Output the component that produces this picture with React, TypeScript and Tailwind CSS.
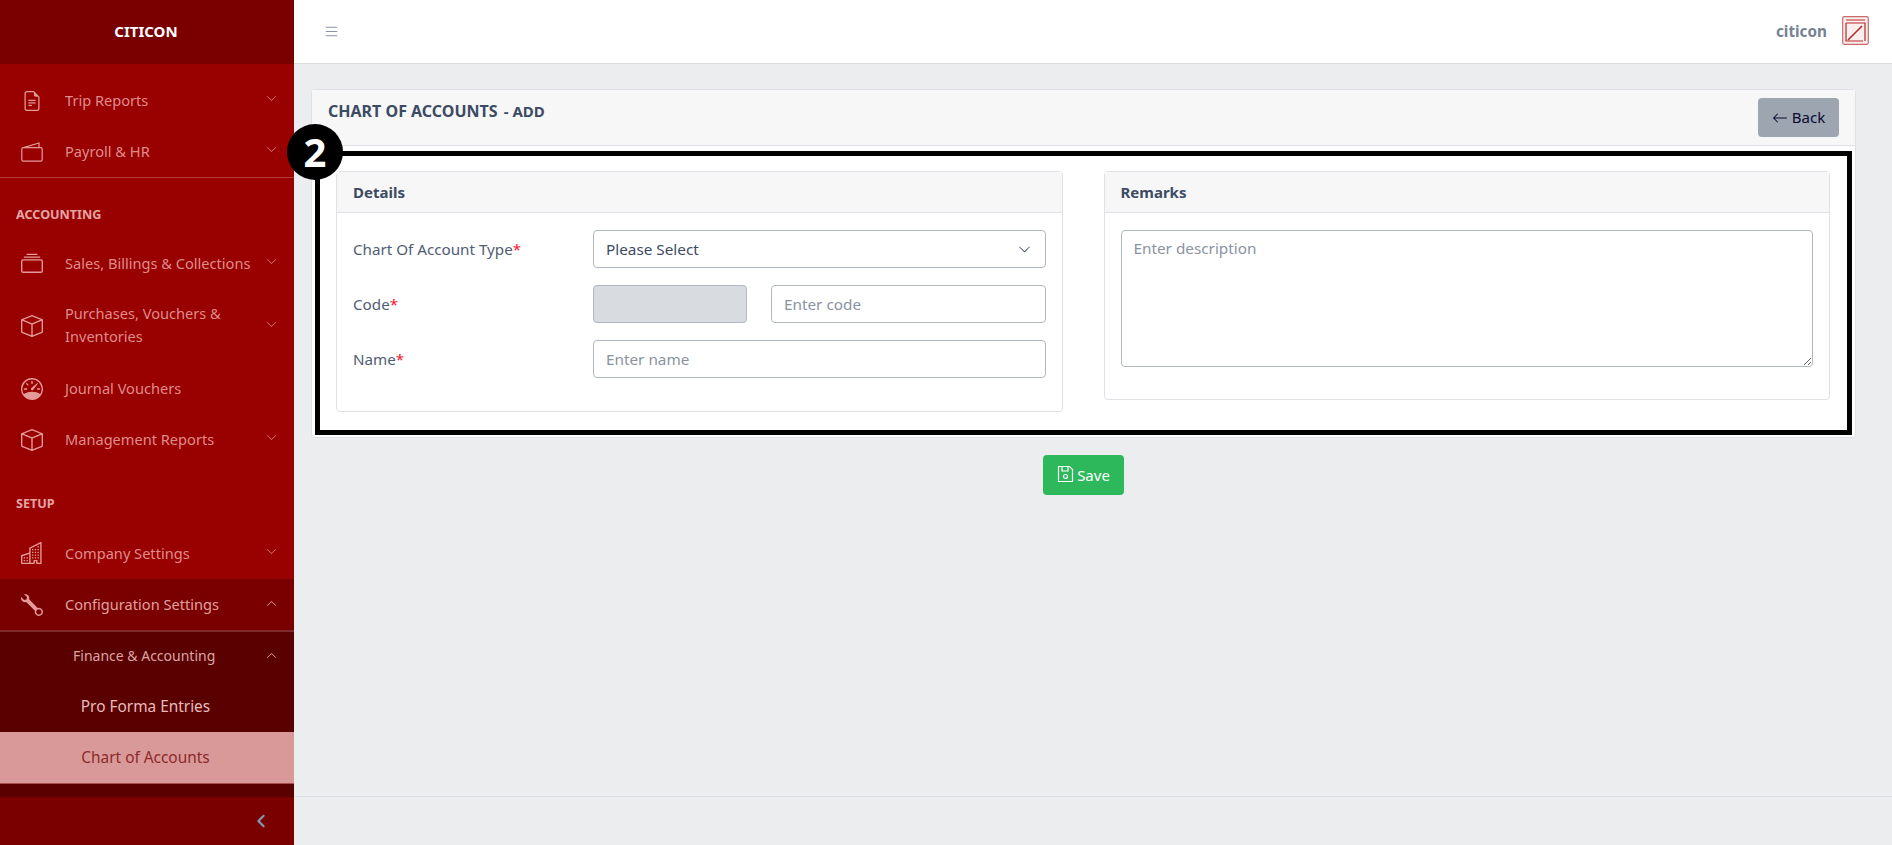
import React from "react";
import { BsArrowLeft, BsBox, BsBuildings, BsChevronDown, BsChevronLeft, BsChevronUp, BsCollection, BsFileEarmarkText, BsList, BsSpeedometer, BsWrench } from "react-icons/bs";

function WalletIcon() {
  return (
    <svg width="22" height="20" viewBox="0 0 22 20" fill="none" stroke="currentColor" strokeWidth="1.2">
      <rect x="0.8" y="5.6" width="20.4" height="13.6" rx="1.6" />
      <path d="M2.5 5.6L18 1V5.6" />
    </svg>
  );
}

function NavRow({ icon, label, chevron, tall, active, rowH }: { icon: React.ReactNode; label: React.ReactNode; chevron?: "up" | "down"; tall?: boolean; active?: boolean; rowH?: string }) {
  return (
    <div className={`flex items-center pl-[20px] pr-[17px] ${rowH ? rowH : tall ? "h-[74px]" : "h-[51px]"} ${active ? "bg-[#7a0000] text-[#e0a0a0]" : ""}`}>
      <span className="w-[24px] flex justify-center text-[22px] text-[#e59a9a]">{icon}</span>
      <span className={`ml-[21px] flex-1 leading-[23px] ${tall ? "pb-[3px]" : ""}`}>{label}</span>
      {chevron === "down" && <BsChevronDown className="w-[11px] h-[11px] text-[#d97a7a] -mt-[4px]" />}
      {chevron === "up" && <BsChevronUp className="w-[11px] h-[11px] text-[#e0a0a0] -mt-[2px]" />}
    </div>
  );
}

function Sidebar() {
  return (
    <aside className="w-[294px] shrink-0 h-full bg-[#990000] flex flex-col text-[14.6px] text-[#df8c8c]">
      <div className="h-[64px] shrink-0 bg-[#7a0000] flex items-center justify-center text-white font-bold text-[15px] pb-[2px] pr-[2px]">CITICON</div>
      <div className="flex-1 flex flex-col pt-[11px]">
        <NavRow icon={<BsFileEarmarkText className="w-[20px] h-[20px]" />} label="Trip Reports" chevron="down" />
        <NavRow icon={<WalletIcon />} label="Payroll & HR" chevron="down" />
        <div className="border-t border-[#b53a3a]" />
        <div className="h-[60px] pl-[16px] pt-[14px] flex items-center text-[12.6px] font-bold text-[#e5a5a5]">ACCOUNTING</div>
        <NavRow icon={<BsCollection />} label="Sales, Billings & Collections" chevron="down" />
        <NavRow icon={<BsBox />} label={<>Purchases, Vouchers &<br />Inventories</>} chevron="down" tall />
        <NavRow icon={<BsSpeedometer />} label="Journal Vouchers" />
        <NavRow icon={<BsBox />} label="Management Reports" chevron="down" />
        <div className="h-[62px] pl-[16px] pt-[16px] flex items-center text-[12.6px] font-bold text-[#e5a5a5]">SETUP</div>
        <NavRow icon={<BsBuildings />} label="Company Settings" chevron="down" rowH="h-[52px]" />
        <NavRow icon={<BsWrench />} label="Configuration Settings" chevron="up" active />
        <div className="bg-[#5a0000] border-t-2 border-[#7f2a2a] flex-1">
          <div className="h-[50px] flex items-center pl-[73px] pr-[17px] pb-[4px] text-[#dba5a5] text-[14px]">
            <span className="flex-1">Finance & Accounting</span>
            <BsChevronUp className="w-[11px] h-[11px] text-[#e0a0a0]" />
          </div>
          <div className="h-[50px] flex items-center justify-center text-[#e8bcbc] text-[15.4px] pr-[3px]">Pro Forma Entries</div>
          <div className="h-[52px] flex items-center justify-center bg-[#d99999] text-[#8c2a2a] border-b border-[#a85050] text-[15.4px] pr-[3px]">Chart of Accounts</div>
        </div>
      </div>
      <div className="h-[48px] shrink-0 bg-[#7a0000] flex items-center justify-end pr-[26px]">
        <BsChevronLeft className="w-[14px] h-[14px] text-[#7f9ab5] stroke-[1.5]" />
      </div>
    </aside>
  );
}

function Field({ label, children }: { label: string; children: React.ReactNode }) {
  return (
    <div className="flex items-center h-[38px] mb-[17px]">
      <div className="w-[240px] shrink-0 text-[15.2px] text-[#4f5d73]">{label}<span className="text-[#f0142f]">*</span></div>
      {children}
    </div>
  );
}

const inputCls = "h-[38px] rounded-[4px] border border-[#b1b7c1] px-[12px] text-[15.3px] placeholder:text-[#8a93a2] outline-none";

function DetailsCard() {
  return (
    <div className="border border-[#dfe1e6] rounded-[4px] bg-white">
      <div className="h-[41px] bg-[#f7f7f7] border-b border-[#dfe1e6] flex items-center px-[16px] text-[15px] font-bold text-[#3c4b64]">Details</div>
      <div className="pt-[17px] pb-[16px] px-[16px]">
        <Field label="Chart Of Account Type">
          <div className={`${inputCls} bg-white flex-1 flex items-center justify-between text-[#3c4b64] pr-[14px]`}>
            <span>Please Select</span>
            <BsChevronDown className="w-[13px] h-[13px] text-[#3c4b64]" />
          </div>
        </Field>
        <Field label="Code">
          <input disabled className={`${inputCls} w-[154px] bg-[#d8dbe0]`} />
          <input placeholder="Enter code" className={`${inputCls} bg-white ml-[24px] flex-1 min-w-0`} />
        </Field>
        <Field label="Name">
          <input placeholder="Enter name" className={`${inputCls} bg-white flex-1 min-w-0`} />
        </Field>
      </div>
    </div>
  );
}

function RemarksCard() {
  return (
    <div className="border border-[#dfe1e6] rounded-[4px] bg-white">
      <div className="h-[41px] bg-[#f7f7f7] border-b border-[#dfe1e6] flex items-center px-[16px] text-[15px] font-bold text-[#3c4b64]">Remarks</div>
      <div className="pt-[17px] pb-[32px] px-[16px]">
        <textarea placeholder="Enter description" className="block w-full h-[137px] rounded-[4px] border border-[#b1b7c1] px-[12px] py-[6px] text-[15.3px] placeholder:text-[#8a93a2] outline-none" />
      </div>
    </div>
  );
}

export default function App() {
  return (
    <div className="h-screen flex overflow-hidden bg-[#ebedef] font-['Noto_Sans',sans-serif]">
      <Sidebar />
      <div className="flex-1 min-w-0 flex flex-col">
        <header className="h-[64px] shrink-0 bg-white border-b border-[#dcdfe4] flex items-center pl-[29px] pr-[23px]">
          <BsList className="w-[17px] h-[17px] text-[#8a93a2] -mt-[1px]" />
          <span className="ml-auto font-bold text-[15.3px] text-[#768192]">citicon</span>
          <svg width="27" height="29" viewBox="0 0 27 29" fill="none" className="ml-[15px] -mt-[2px]">
            <rect x="0.7" y="0.7" width="25.6" height="27.6" rx="1.5" stroke="#c96a6a" strokeWidth="1.2" fill="#fbeeee" />
            <path d="M4 4H23M4 7H23V25M4 7V25H21" stroke="#b52a2a" strokeWidth="1.2" />
            <path d="M6 24L20 10" stroke="#b52a2a" strokeWidth="1.6" />
          </svg>
        </header>
        <main className="flex-1 pl-[17px] pr-[36px] pt-[25px]">
          <div className="border border-[#dfe1e6] rounded-[4px] bg-white">
            <div className="h-[56px] bg-[#f7f7f7] border-b border-[#dfe1e6] flex justify-between pl-[16px] pr-[16px] pt-[8px]">
              <div className="font-bold text-[#3c4b64] text-[16px] leading-[24px] mt-[1px]">CHART OF ACCOUNTS <span className="text-[15px] ml-[2px]">- ADD</span></div>
              <button className="h-[39px] w-[81px] rounded-[4px] bg-[#9da5b1] text-[15px] text-[#0a0b30] flex items-center justify-center gap-[4px]">
                <BsArrowLeft className="w-[16px] h-[16px]" />
                Back
              </button>
            </div>
            <div className="relative grid grid-cols-2 gap-[41px] items-start pl-[24px] pr-[25px] pt-[25px] pb-[25px]">
              <DetailsCard />
              <RemarksCard />
              <div className="absolute left-[3px] right-[3px] top-[5px] bottom-[2px] border-[5px] border-black pointer-events-none" />
              <div className="absolute left-[-25px] top-[-22px] w-[56px] h-[56px] rounded-full bg-black flex items-center justify-center text-white text-[40px] font-bold leading-none">2</div>
            </div>
          </div>
          <div className="flex justify-center mt-[17px]">
            <button className="h-[40px] w-[81px] rounded-[4px] bg-[#2eb85c] text-white text-[15px] flex items-center justify-center gap-[3px]">
              <svg width="17" height="18" viewBox="0 0 17 18" fill="none" stroke="currentColor" strokeWidth="1.2" className="-mt-[3px]">
                <path d="M1.5 1.5H12.5L15.5 4.5V16.5H1.5Z" />
                <path d="M5 1.5V6H11V1.5" />
                <circle cx="8.5" cy="11.5" r="2" />
              </svg>
              Save
            </button>
          </div>
        </main>
        <footer className="h-[49px] shrink-0 border-t border-[#dcdfe4] bg-[#ebedef]" />
      </div>
    </div>
  );
}
